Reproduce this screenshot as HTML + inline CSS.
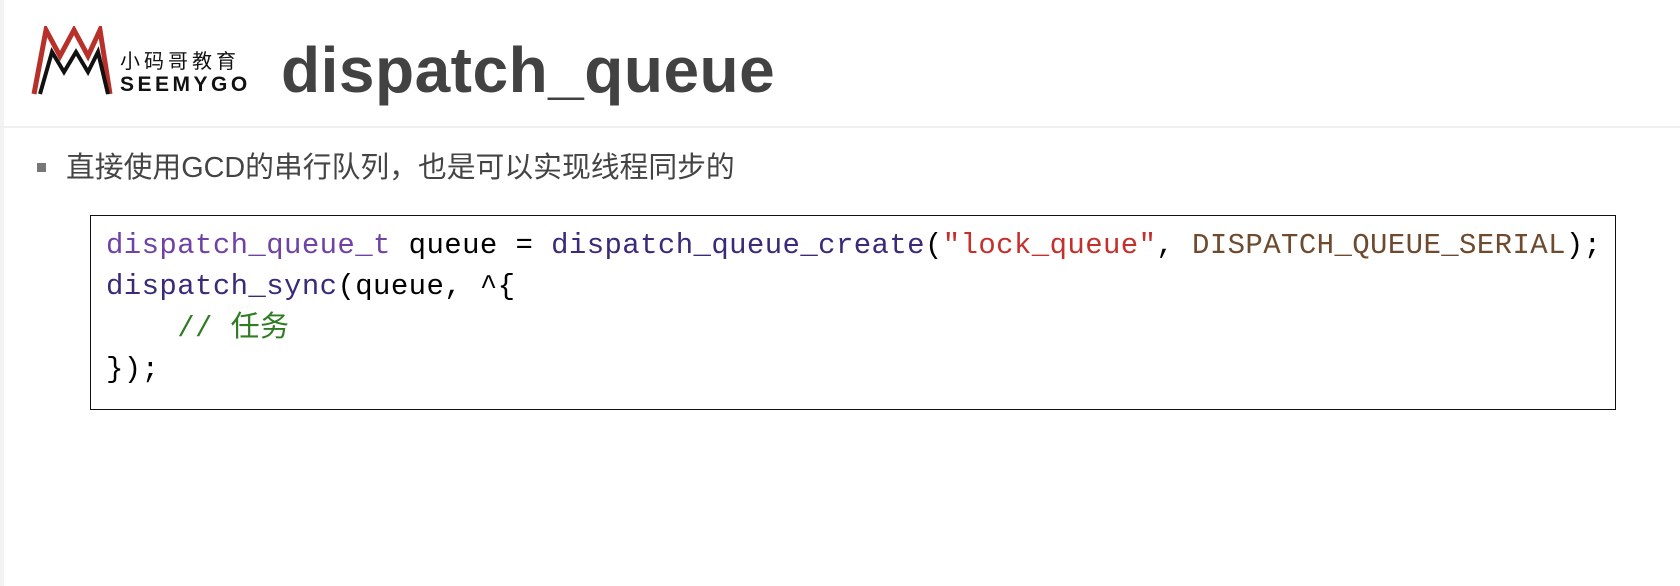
<!DOCTYPE html>
<html><head><meta charset="utf-8"><style>
html,body{margin:0;padding:0;}
body{width:1680px;height:586px;background:#fff;position:relative;overflow:hidden;font-family:"Liberation Sans","Noto Sans CJK SC",sans-serif;}
.lb{position:absolute;left:0;top:0;width:4px;height:586px;background:#f3f3f3;}
.hdr{position:absolute;left:0;top:126px;width:1680px;height:2px;background:#f0f0f0;}
.title{position:absolute;left:281px;top:30px;font-size:64px;font-weight:bold;color:#424242;line-height:80px;letter-spacing:0.5px;}
.logo{position:absolute;left:30px;top:26px;}
.cn{position:absolute;left:120px;top:48px;font-size:20px;line-height:24px;color:#111;letter-spacing:4px;font-family:"Noto Sans CJK SC",sans-serif;}
.en{position:absolute;left:120px;top:73px;font-size:21px;line-height:24px;color:#111;letter-spacing:3.5px;font-weight:bold;}
.bul{position:absolute;left:37px;top:163px;width:9px;height:9px;background:#777;}
.bt{position:absolute;left:66px;top:150px;font-size:28.8px;color:#444;line-height:36px;}
.box{position:absolute;left:90px;top:215px;width:1524px;height:193px;border:1.5px solid #111;}
.code{position:absolute;left:106px;top:225px;font-family:"Liberation Mono","Noto Sans CJK SC",monospace;font-size:29px;letter-spacing:0.4px;line-height:41.3px;color:#000;white-space:pre;}
.t{color:#6f42a6}.f{color:#3a2a78}.s{color:#c4302b}.m{color:#6e4a2e}.c{color:#2e7d22}
</style></head><body>
<div class="lb"></div>
<svg class="logo" width="85" height="70" viewBox="0 0 85 70">
<polyline points="4,68 16,4 30,30 44,4 58,30 70,4 80,68" fill="none" stroke="#b8302a" stroke-width="5"/>
<polyline points="10,68 22,26 34,46 46,26 58,46 68,26 78,68" fill="none" stroke="#111" stroke-width="4"/>
</svg>
<div class="cn">小码哥教育</div>
<div class="en">SEEMYGO</div>
<div class="title">dispatch_queue</div>
<div class="hdr"></div>
<div class="bul"></div>
<div class="bt">直接使用GCD的串行队列，也是可以实现线程同步的</div>
<div class="box"></div>
<div class="code"><span class="t">dispatch_queue_t</span> queue = <span class="f">dispatch_queue_create</span>(<span class="s">"lock_queue"</span>, <span class="m">DISPATCH_QUEUE_SERIAL</span>);
<span class="f">dispatch_sync</span>(queue, ^{
    <span class="c">// 任务</span>
});</div>
</body></html>
